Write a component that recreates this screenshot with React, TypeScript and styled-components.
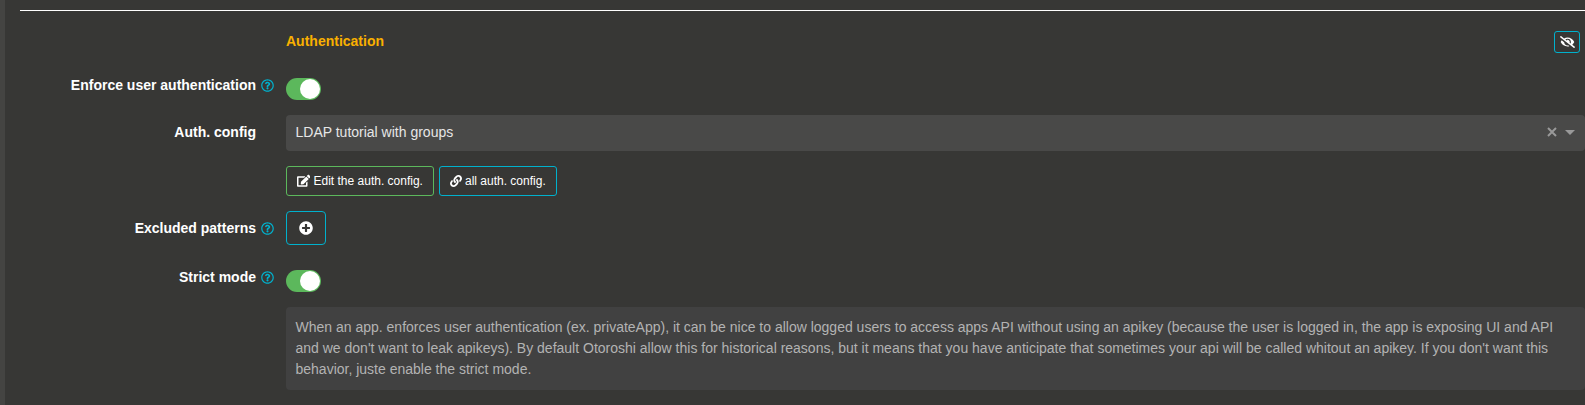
import React from "react";
import styled, { createGlobalStyle } from "styled-components";
import { FaRegQuestionCircle, FaEdit, FaLink, FaPlusCircle, FaEyeSlash } from "react-icons/fa";

const GlobalStyle = createGlobalStyle`
  * { box-sizing: border-box; }
  body {
    margin: 0;
    overflow: hidden;
    background: #373735;
    color: #fff;
    font-family: "Liberation Sans", Arial, sans-serif;
    font-size: 14px;
    line-height: 21px;
  }
  button { font-family: inherit; color: inherit; }
`;

const Page = styled.div`
  height: 405px;
  border-left: 5px solid #444442;
  padding: 10px 0 0 15px;
`;

const Divider = styled.hr`
  margin: 0;
  border: 0;
  height: 1px;
  background: #fff;
`;

const Row = styled.div<{ $gap: number }>`
  display: grid;
  grid-template-columns: 254px minmax(0, 1fr);
  column-gap: 12px;
  margin-top: ${(p) => p.$gap}px;
  align-items: start;
`;

const Label = styled.div<{ $top: number }>`
  display: grid;
  grid-template-columns: auto 13px;
  column-gap: 5px;
  justify-content: end;
  align-items: start;
  padding-top: ${(p) => p.$top}px;
  font-weight: 700;
  white-space: nowrap;
`;

const HelpIcon = styled(FaRegQuestionCircle)`
  width: 13px;
  height: 13px;
  margin-top: 4px;
  color: #00b1cd;
`;

const Heading = styled.div`
  display: flex;
  justify-content: space-between;
  align-items: flex-start;
  padding-right: 5px;
  color: #f9b000;
  font-weight: 700;
`;

const HideButton = styled.button`
  display: flex;
  align-items: center;
  justify-content: center;
  width: 26px;
  height: 22px;
  padding: 0 0 1px;
  color: #fff;
  background: transparent;
  border: 1px solid #00b1cd;
  border-radius: 3px;

  svg {
    width: 15px;
    height: 12px;
  }
`;

const SwitchTrack = styled.div`
  display: flex;
  justify-content: flex-end;
  width: 35px;
  height: 22px;
  margin-top: 3px;
  padding: 1px;
  border-radius: 11px;
  background: #5cb85c;
`;

const Knob = styled.span`
  width: 20px;
  height: 20px;
  border-radius: 50%;
  background: #fff;
`;

const Select = styled.div`
  display: flex;
  align-items: center;
  height: 36px;
  padding: 0 10px 2px 9.5px;
  border-radius: 4px;
  background: #494948;
  color: #e6e6e6;
`;

const SelectValue = styled.span`
  flex: 1;
`;

const ClearIcon = styled.svg`
  width: 10px;
  height: 10px;
  margin-right: 8px;
`;

const Caret = styled.span`
  border: 5px solid transparent;
  border-top-color: #999;
  border-bottom: 0;
`;

const Buttons = styled.div`
  display: flex;
  gap: 5px;
`;

const LinkButton = styled.button<{ $color: string; $width: number }>`
  display: flex;
  align-items: center;
  width: ${(p) => p.$width}px;
  height: 30px;
  padding: 0 0 1px 9.5px;
  gap: 3.5px;
  background: transparent;
  border: 1px solid ${(p) => p.$color};
  border-radius: 3px;
  font-size: 12px;
  line-height: 18px;
  white-space: nowrap;
`;

const AddButton = styled.button`
  display: flex;
  align-items: center;
  justify-content: center;
  width: 40px;
  height: 34px;
  padding: 0 1px 1px 0;
  background: transparent;
  border: 1px solid #00b1cd;
  border-radius: 4px;
  font-size: 14px;
`;

const Notice = styled.div`
  height: 83px;
  padding: 10px 0 10px 9.5px;
  border-radius: 4px;
  background: #414141;
  color: #b3b3b3;
  white-space: nowrap;
`;

const Line = styled.div``;

function FieldLabel({ text, help = false, top = 0 }: { text: string; help?: boolean; top?: number }) {
  return (
    <Label $top={top}>
      <span>{text}</span>
      {help && <HelpIcon />}
    </Label>
  );
}

function Toggle() {
  return (
    <SwitchTrack role="switch" aria-checked="true">
      <Knob />
    </SwitchTrack>
  );
}

export default function App() {
  return (
    <>
      <GlobalStyle />
      <Page>
        <Divider />
        <Row $gap={20}>
          <span />
          <Heading>
            <span>Authentication</span>
            <HideButton aria-label="Hide section"><FaEyeSlash /></HideButton>
          </Heading>
        </Row>
        <Row $gap={22}>
          <FieldLabel text="Enforce user authentication" help />
          <Toggle />
        </Row>
        <Row $gap={15}>
          <FieldLabel text="Auth. config" top={7} />
          <Select>
            <SelectValue>LDAP tutorial with groups</SelectValue>
            <ClearIcon viewBox="0 0 10 10">
              <path d="M1 1L9 9M9 1L1 9" stroke="#999" strokeWidth="2" />
            </ClearIcon>
            <Caret />
          </Select>
        </Row>
        <Row $gap={15}>
          <span />
          <Buttons>
            <LinkButton $color="#5cb85c" $width={148}><FaEdit size={13.5} />Edit the auth. config.</LinkButton>
            <LinkButton $color="#00b1cd" $width={118}><FaLink size={12} />all auth. config.</LinkButton>
          </Buttons>
        </Row>
        <Row $gap={15}>
          <FieldLabel text="Excluded patterns" help top={7} />
          <AddButton aria-label="Add pattern"><FaPlusCircle /></AddButton>
        </Row>
        <Row $gap={22}>
          <FieldLabel text="Strict mode" help />
          <Toggle />
        </Row>
        <Row $gap={15}>
          <span />
          <Notice>
            <Line>When an app. enforces user authentication (ex. privateApp), it can be nice to allow logged users to access apps API without using an apikey (because the user is logged in, the app is exposing UI and API</Line>
            <Line>and we don't want to leak apikeys). By default Otoroshi allow this for historical reasons, but it means that you have anticipate that sometimes your api will be called whitout an apikey. If you don't want this</Line>
            <Line>behavior, juste enable the strict mode.</Line>
          </Notice>
        </Row>
      </Page>
    </>
  );
}
